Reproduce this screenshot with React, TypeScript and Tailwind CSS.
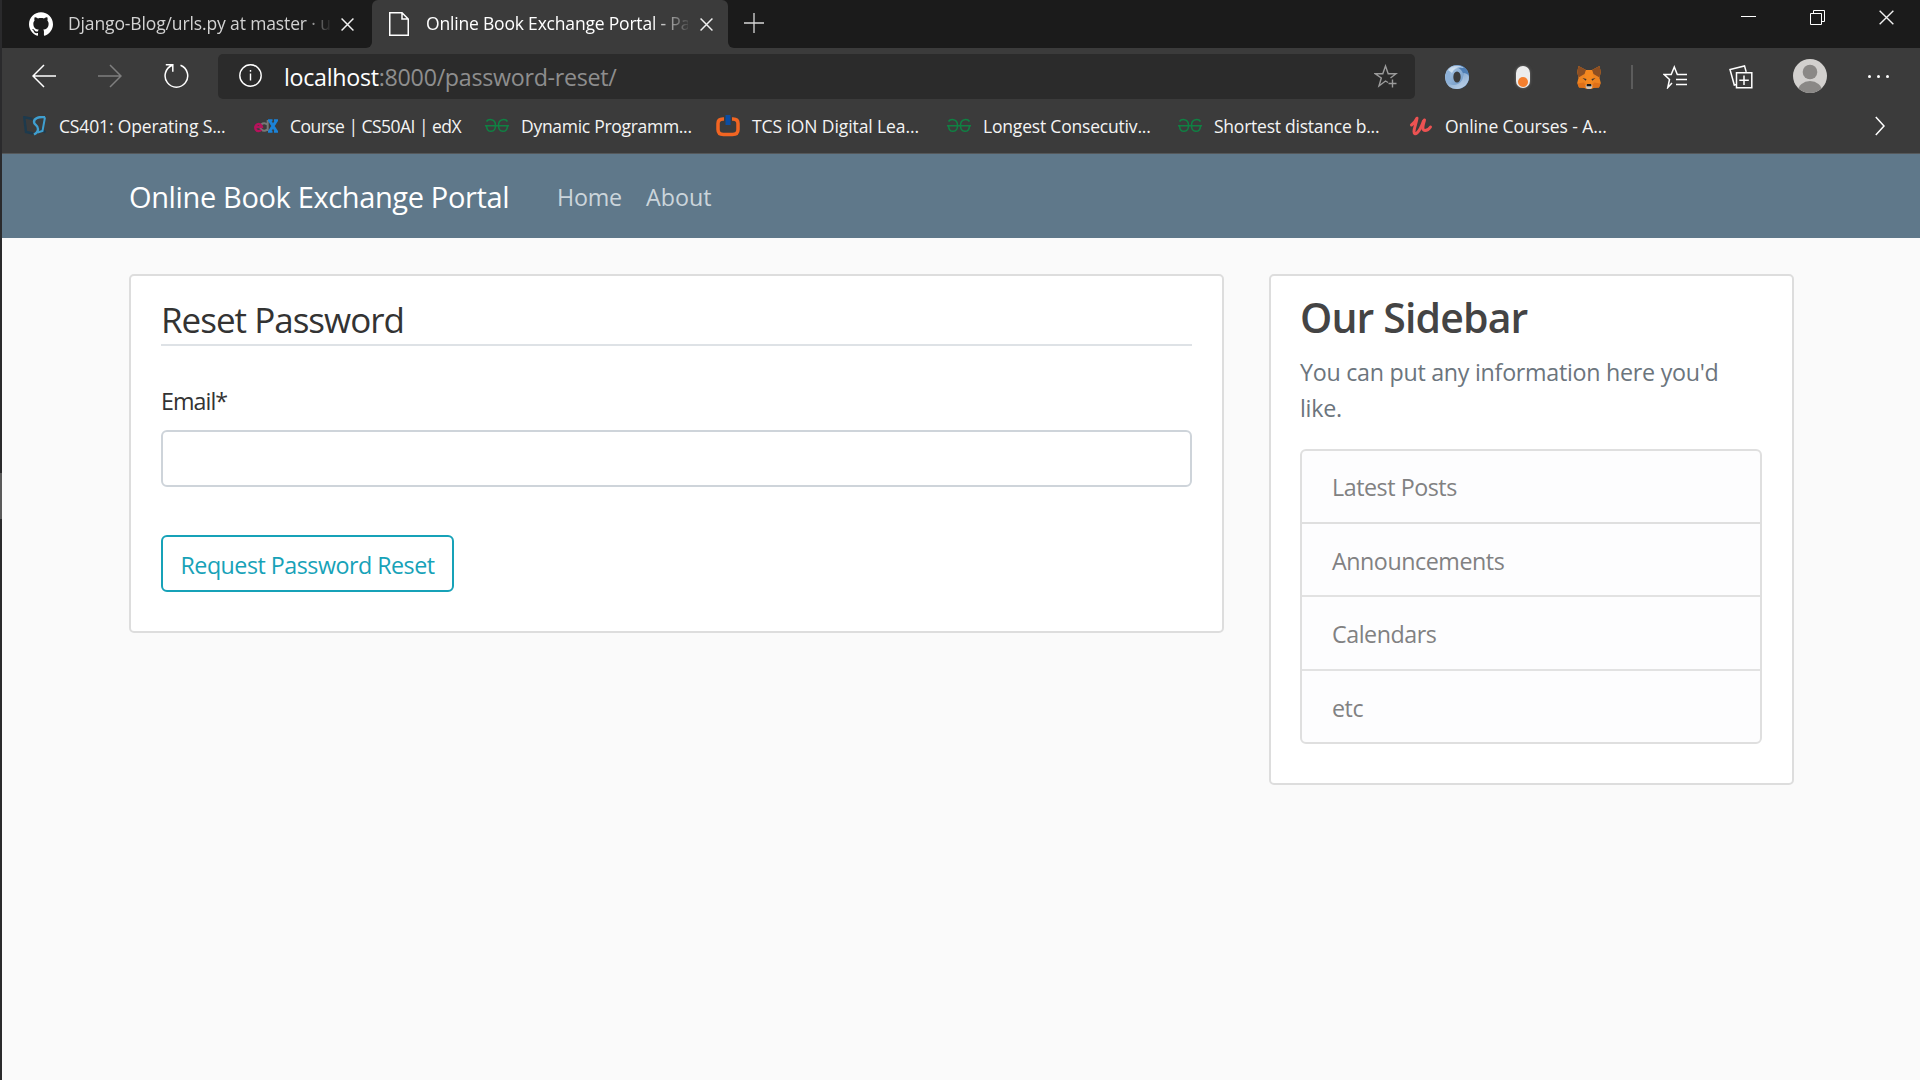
import React from "react";

function GithubMark() {
  return (
    <svg viewBox="0 0 24 24" className="h-6 w-6 fill-white">
      <path d="M12 .297c-6.63 0-12 5.373-12 12 0 5.303 3.438 9.8 8.205 11.385.6.113.82-.258.82-.577 0-.285-.01-1.04-.015-2.04-3.338.724-4.042-1.61-4.042-1.61C4.422 18.07 3.633 17.7 3.633 17.7c-1.087-.744.084-.729.084-.729 1.205.084 1.838 1.236 1.838 1.236 1.07 1.835 2.809 1.305 3.495.998.108-.776.417-1.305.76-1.605-2.665-.3-5.466-1.332-5.466-5.93 0-1.31.465-2.38 1.235-3.22-.135-.303-.54-1.523.105-3.176 0 0 1.005-.322 3.3 1.23.96-.267 1.98-.399 3-.405 1.02.006 2.04.138 3 .405 2.28-1.552 3.285-1.23 3.285-1.23.645 1.653.24 2.873.12 3.176.765.84 1.23 1.91 1.23 3.22 0 4.61-2.805 5.625-5.475 5.92.42.36.81 1.096.81 2.22 0 1.606-.015 2.896-.015 3.286 0 .315.21.69.825.57C20.565 22.092 24 17.592 24 12.297c0-6.627-5.373-12-12-12" />
    </svg>
  );
}

function PageIcon() {
  return (
    <svg viewBox="0 0 20 24" className="h-6 w-5 fill-none stroke-white" strokeWidth="1.5">
      <path d="M.75.75H13L19.25 7v16.25H.75zM13 .75V7h6.25" />
    </svg>
  );
}

function CloseIcon({ size, thin }: { size: number; thin?: boolean }) {
  return (
    <svg width={size} height={size} viewBox="0 0 14 14" className="shrink-0 fill-none stroke-[#f0f0f0]" strokeWidth={thin ? 1.3 : 1.6}>
      <path d="M.6.6l12.8 12.8M13.4.6L.6 13.4" />
    </svg>
  );
}

function TabBar() {
  return (
    <div className="flex h-12 bg-[#3b3b3b]">
      <div className="flex w-[370px] items-center rounded-br-md bg-[#1b1b1b] pl-[27px]">
        <GithubMark />
        <div className="ml-[15px] h-[47px] w-[262px] text-[17.5px] leading-[45px] tracking-[-0.13px] whitespace-nowrap text-[#d2d2d2] [mask-image:linear-gradient(to_right,black_236px,transparent_264px)]">
          Django-Blog/urls.py at master · u
        </div>
        <div className="ml-[11px] flex">
          <CloseIcon size={13} />
        </div>
      </div>
      <div className="bg-[linear-gradient(#1b1b1b_50%,#3b3b3b_50%)]">
        <div className="flex h-12 w-[356px] items-center rounded-t-md bg-[#3b3b3b] pl-[17px]">
          <PageIcon />
          <div className="ml-[17px] h-[47px] w-[262px] text-[17.5px] leading-[45px] tracking-[-0.19px] whitespace-nowrap text-white [mask-image:linear-gradient(to_right,black_225px,transparent_266px)]">
            Online Book Exchange Portal - Pa
          </div>
          <div className="ml-[12px] flex">
            <CloseIcon size={13} />
          </div>
        </div>
      </div>
      <div className="flex flex-1 items-start rounded-bl-md bg-[#1b1b1b]">
        <svg width="20" height="20" className="mt-[13px] ml-4 stroke-[#d8d8d8]" strokeWidth="1.3">
          <path d="M10 0v20M0 10h20" />
        </svg>
        <div className="mt-[10px] mr-[26px] ml-auto flex items-center gap-[54px]">
          <svg width="15" height="15" className="stroke-white" strokeWidth="1">
            <path d="M0 6.5h15" />
          </svg>
          <svg width="15" height="15" className="fill-none stroke-white" strokeWidth="1">
            <path d="M.5 3.5h11v11H.5zM3.500 3.500v-3h11v11h-3" />
          </svg>
          <CloseIcon size={15} thin />
        </div>
      </div>
    </div>
  );
}

function Swirl() {
  return (
    <svg viewBox="0 0 24 24" className="h-6 w-6">
      <defs>
        <linearGradient id="ringA" x1="0" y1="0" x2="1" y2="1">
          <stop offset="0" stopColor="#b7cfe8" />
          <stop offset="1" stopColor="#5a89bd" />
        </linearGradient>
        <linearGradient id="ringB" x1="0" y1="0" x2="1" y2="1">
          <stop offset="0" stopColor="#6c97c6" />
          <stop offset="1" stopColor="#d9e6f4" />
        </linearGradient>
      </defs>
      <circle cx="12" cy="12" r="12" fill="url(#ringA)" />
      <path d="M12 0c8 0 12 6 12 12s-4 10-8 11c4-4 4-14 0-18-3-3-7-3-10-1 1-2 3-4 6-4z" fill="#4f7fb6" />
      <path d="M24 12c0 7-6 12-12 12C6 24 2 21 .8 16c3 4 8 5 12 3 4-2 6-6 5.500-11 2 0 5.500 1 5.700 4z" fill="url(#ringB)" opacity=".85" />
      <path d="M.8 16C-1 9 3 2 9 .5 5 5 4 12 6.500 17c-2 1-4.500.5-5.700-1z" fill="#8db1d8" />
      <path d="M3 5C7-.5 15-1 19 3c-5-1.500-10 0-12 5C6 7 4 6 3 5z" fill="#dbe8f5" opacity=".8" />
      <ellipse cx="12" cy="12" rx="3.700" ry="5.600" fill="#3b3b3b" />
    </svg>
  );
}

function Fox() {
  return (
    <svg viewBox="0 0 24 24" className="h-6 w-6">
      <path d="M1.500 1L9 5h6l7.500-4 1.300 6-1.300 6 1.300 5-1.800 4.500-5 .2-2.500 1.300h-5L7 22.700l-5-.2L.2 18l1.300-5L.2 7z" fill="#ee8320" />
      <path d="M1.500 1L9 5 7.500 9 1.500 12.500.2 7zM22.500 1L15 5l1.500 4 6 3.500L23.800 7z" fill="#8c4e22" />
      <path d="M9 5h6l1.500 7.500L15 19H9l-1.500-6.500z" fill="#f5881f" />
      <path d="M.5 18.500l6.500-1 2 4-2 1.200-5-.2zM23.500 18.500l-6.500-1-2 4 2 1.200 5-.2z" fill="#df7018" />
      <path d="M5.500 13l4 1-.7 1.800zM18.500 13l-4 1 .7 1.800z" fill="#3a3430" />
      <path d="M8.500 20.500l1.500-1h4l1.500 1-.7 2.500-1.300.9h-3L9.200 23z" fill="#cfc4ba" />
      <path d="M10 19h4l.5 2.300h-5z" fill="#181818" />
    </svg>
  );
}

function AddressRow() {
  return (
    <div className="flex h-[57px] items-center">
      <div className="-mt-[2px] flex w-[216px] items-center pl-[30px]">
        <svg width="24" height="24" viewBox="0 0 24 24" className="fill-none stroke-white" strokeWidth="1.5">
          <path d="M24 12H.8M12 1L1 12l11 11" />
        </svg>
        <svg width="24" height="24" viewBox="0 0 24 24" className="ml-[42px] fill-none stroke-[#7f7f7f]" strokeWidth="1.5">
          <path d="M0 12h23.200M12 1l11 11-11 11" />
        </svg>
        <svg width="26" height="26" viewBox="0 0 26 26" className="ml-[41px] fill-none stroke-white" strokeWidth="1.5">
          <path d="M17.500 2.300A11.300 11.300 0 1 1 9.300 2.300M2.800 1.800h7v7" />
        </svg>
      </div>
      <div className="flex h-[45px] w-[1197px] items-center rounded-[5px] bg-[#2b2b2b] pr-[17px] pl-[21px]">
        <svg width="23" height="23" viewBox="0 0 23 23" className="-mt-[2px] fill-none stroke-white" strokeWidth="1.4">
          <circle cx="11.500" cy="11.500" r="10.700" />
          <path d="M11.500 9.500v7M11.500 6v1.700" />
        </svg>
        <div className="ml-[22px] pt-[2px] text-[23.25px] leading-[43px] tracking-[-0.29px] text-[#8e8e8e]">
          <span className="text-white">localhost</span>:8000/password-reset/
        </div>
        <svg width="24" height="26" viewBox="0 0 24 26" className="ml-auto fill-none stroke-[#9b9b9b]" strokeWidth="1.4">
          <path d="M14 18.500L11.500 17 5 22l2.300-8L1 9.700h7.800L11.500 2l2.700 7.700H22L16.500 14M18.500 15.500v8M14.500 19.500h8" />
        </svg>
      </div>
      <div className="ml-[9px] grid grid-cols-[66px_66px_66px_20px_66px_66px_72px_64px] place-items-center">
        <Swirl />
        <div className="flex h-[22px] w-[14px] items-end rounded-full bg-[#ececec] px-[2px] pb-[1px] shadow-[0_0_3px_#777]">
          <div className="h-[10px] w-[10px] rounded-full bg-[#f47f2f]" />
        </div>
        <Fox />
        <div className="h-6 w-[2px] bg-[#5c5c5c]" />
        <svg width="24" height="24" viewBox="0 0 24 24" className="fill-none stroke-white" strokeWidth="1.5">
          <path d="M9 18l-4.200 4.500L6.500 14.500 1.200 9.500h7L11.300 2l3 7.500H24M13 14.500h11M13 19.500h11" />
        </svg>
        <svg width="24" height="24" viewBox="0 0 24 24" className="fill-none stroke-white" strokeWidth="1.500">
          <path d="M7.500 7.700h15.300v15H7.500zM15 10.500v9.500M10.300 15.200h9.500M7.500 19.500L5.300 20 1 4.500 15.500.9l1.700 6" />
        </svg>
        <svg width="34" height="34" viewBox="0 0 34 34" className="-mt-[2px]">
          <clipPath id="avatar">
            <circle cx="17" cy="17" r="17" />
          </clipPath>
          <g clipPath="url(#avatar)">
            <path d="M0 0h34v34H0z" fill="#d2d0ce" />
            <circle cx="17" cy="13" r="7.300" fill="#8a8886" />
            <ellipse cx="17" cy="32" rx="12" ry="10" fill="#8a8886" />
          </g>
        </svg>
        <div className="flex gap-[6px]">
          <div className="h-[3px] w-[3px] rounded-full bg-white" />
          <div className="h-[3px] w-[3px] rounded-full bg-white" />
          <div className="h-[3px] w-[3px] rounded-full bg-white" />
        </div>
      </div>
    </div>
  );
}

function NptelIcon() {
  return (
    <svg viewBox="0 0 24 20" className="h-5 w-6 fill-none">
      <path d="M9.500 3L1.200 1.200 3 16l7 1.500M18 13l4.500 3.500" stroke="#1d3a4d" strokeWidth="2.400" />
      <path d="M22 1.200C16 .5 11 2 11 6c0 3 4 3 4 7 0 2-2 4.500-4 5.500" stroke="#3f9fd0" strokeWidth="2.400" />
      <path d="M22 1.200L19.500 15l-5 1.500" stroke="#3f9fd0" strokeWidth="2" />
    </svg>
  );
}

function EdxIcon() {
  return (
    <svg viewBox="0 0 24 14" className="h-[14px] w-6 fill-none">
      <path d="M13 5.500a3.800 3.800 0 1 0 0 5M13.700 1v11" stroke="#777" strokeWidth="2" />
      <path d="M1.500 8h6.500A3.400 3.600 0 1 0 7.300 10.800" stroke="#b5125b" strokeWidth="2.300" />
      <path d="M15.500 1.500L22.500 12.500M22.500 1.500L15.500 12.500" stroke="#1b83d8" strokeWidth="3" />
      <path d="M14 1.300h4.500M20 1.300h4M14 12.700h4.500M20 12.700h4" stroke="#1b83d8" strokeWidth="2" />
    </svg>
  );
}

function GfgIcon() {
  return (
    <svg viewBox="0 0 24 14" className="h-[15px] w-6 fill-none stroke-[#0f8143]" strokeWidth="1.500">
      <path d="M1.500 3C3 .5 10.500-.5 10.500 7c0 7.500-8.500 8-9 .2H11M22.500 3C21 .5 13.500-.5 13.500 7c0 7.500 8.500 8 9 .2H13M0 7.200h24" />
    </svg>
  );
}

function TcsIcon() {
  return (
    <svg viewBox="0 0 24 22" className="h-[22px] w-6 fill-none">
      <path d="M8 4H7Q2 4 2 8.500v6Q2 19.500 7.500 19.500h9q5.500 0 5.500-5v-6Q22 4 17 4H16" stroke="#f26522" strokeWidth="3.500" />
      <path d="M12 0v10" stroke="#0b4da2" strokeWidth="5" />
    </svg>
  );
}

function UdemyIcon() {
  return (
    <svg viewBox="0 0 22 20" className="h-5 w-6 fill-none stroke-[#ec5252]" strokeLinecap="round" strokeLinejoin="round">
      <path d="M1.500 9C4 7 6 4.500 7 2.200 6.500 7 4 12 4 15.500c0 4.500 5 2.500 9.500-10.500" strokeWidth="3" />
      <path d="M14.500 4c-1.500 5-3 10.500.5 10.500 2.500 0 4.500-2 5.500-3.500" strokeWidth="3" />
    </svg>
  );
}

function Bookmarks() {
  const item = "flex w-[231px] items-center gap-3 whitespace-nowrap";
  return (
    <div className="flex h-12 items-center pb-[7px] pl-[21px] text-[17.5px] leading-[40px] text-[#f4f4f4]">
      <div className={item}>
        <NptelIcon />
        <span className="tracking-[-0.15px]">CS401: Operating S...</span>
      </div>
      <div className={item}>
        <EdxIcon />
        <span className="tracking-[-0.53px]">Course | CS50AI | edX</span>
      </div>
      <div className={item}>
        <GfgIcon />
        <span className="tracking-[-0.29px]">Dynamic Programm...</span>
      </div>
      <div className={item}>
        <TcsIcon />
        <span className="tracking-[-0.09px]">TCS iON Digital Lea...</span>
      </div>
      <div className={item}>
        <GfgIcon />
        <span className="tracking-[-0.19px]">Longest Consecutiv...</span>
      </div>
      <div className={item}>
        <GfgIcon />
        <span className="tracking-[-0.24px]">Shortest distance b...</span>
      </div>
      <div className={item}>
        <UdemyIcon />
        <span className="tracking-[-0.1px]">Online Courses - A...</span>
      </div>
      <svg width="10" height="20" viewBox="0 0 10 20" className="mr-[35px] ml-auto fill-none stroke-white" strokeWidth="1.500">
        <path d="M.8 1l8.200 9-8.200 9" />
      </svg>
    </div>
  );
}

function Sidebar() {
  return (
    <aside className="h-[511px] w-[525px] rounded-[5px] border-2 border-[#dddddd] bg-white pt-4 pr-[30px] pl-[29px]">
      <h3 className="text-[41px] leading-[50px] font-semibold tracking-[-0.85px] text-[#444444]">Our Sidebar</h3>
      <p className="mt-3 text-[23.25px] leading-9 tracking-[-0.27px] text-[#6c757d]">
        You can put any information here you'd
        <br />
        like.
      </p>
      <ul className="mt-[23px] rounded-md border-2 border-[#dfdfdf] bg-[#fdfdfe] text-[23.25px] tracking-[-0.45px] text-[#818182]">
        <li className="h-[73px] border-b-2 border-[#dfdfdf] pl-[30px] leading-[73px]">Latest Posts</li>
        <li className="h-[73px] border-b-2 border-[#e2e2e2] pl-[30px] leading-[74px]">Announcements</li>
        <li className="h-[74px] border-b-2 border-[#e2e2e2] pl-[30px] leading-[75px]">Calendars</li>
        <li className="h-[71px] pl-[30px] leading-[75px]">etc</li>
      </ul>
    </aside>
  );
}

function ResetForm() {
  return (
    <section className="h-[359px] w-[1095px] rounded-[5px] border-2 border-[#dddddd] bg-white px-[30px] pt-[18px]">
      <h1 className="h-[52px] border-b-2 border-[#dee2e6] text-[35px] leading-[52px] tracking-[-1px] text-[#333333]">Reset Password</h1>
      <label className="mt-[37px] block text-[23.25px] leading-9 tracking-[-0.95px] text-[#333333]">Email*</label>
      <div className="mt-[11px] h-[57px] rounded-md border-2 border-[#ced4da] bg-white" />
      <button className="mt-12 block h-[57px] w-[293px] rounded-md border-2 border-[#17a2b8] pt-[2px] text-[23.25px] leading-[53px] tracking-[-0.5px] text-[#17a2b8]">
        Request Password Reset
      </button>
    </section>
  );
}

export default function App() {
  return (
    <div className="flex h-[1080px] w-[1920px] overflow-hidden bg-[#fafafa] font-['Open_Sans',sans-serif]">
      <div className="w-[2px] bg-[#2a2a2c] pt-[473px]">
        <div className="h-[46px] bg-[#5a5a5a]" />
      </div>
      <div className="w-[1918px]">
        <TabBar />
        <div className="h-[106px] border-b border-[#55585a] bg-[#3b3b3b]">
          <AddressRow />
          <Bookmarks />
        </div>
        <nav className="flex h-[84px] items-center bg-[#5f788a] pt-[2px] pl-[127px]">
          <span className="w-[428px] text-[29px] tracking-[-0.36px] text-white">Online Book Exchange Portal</span>
          <span className="w-[89px] text-[23.25px] tracking-[-0.2px] text-[#cbd5db]">Home</span>
          <span className="text-[23.25px] text-[#cbd5db]">About</span>
        </nav>
        <main className="flex items-start gap-[45px] pt-9 pl-[127px]">
          <ResetForm />
          <Sidebar />
        </main>
      </div>
    </div>
  );
}
